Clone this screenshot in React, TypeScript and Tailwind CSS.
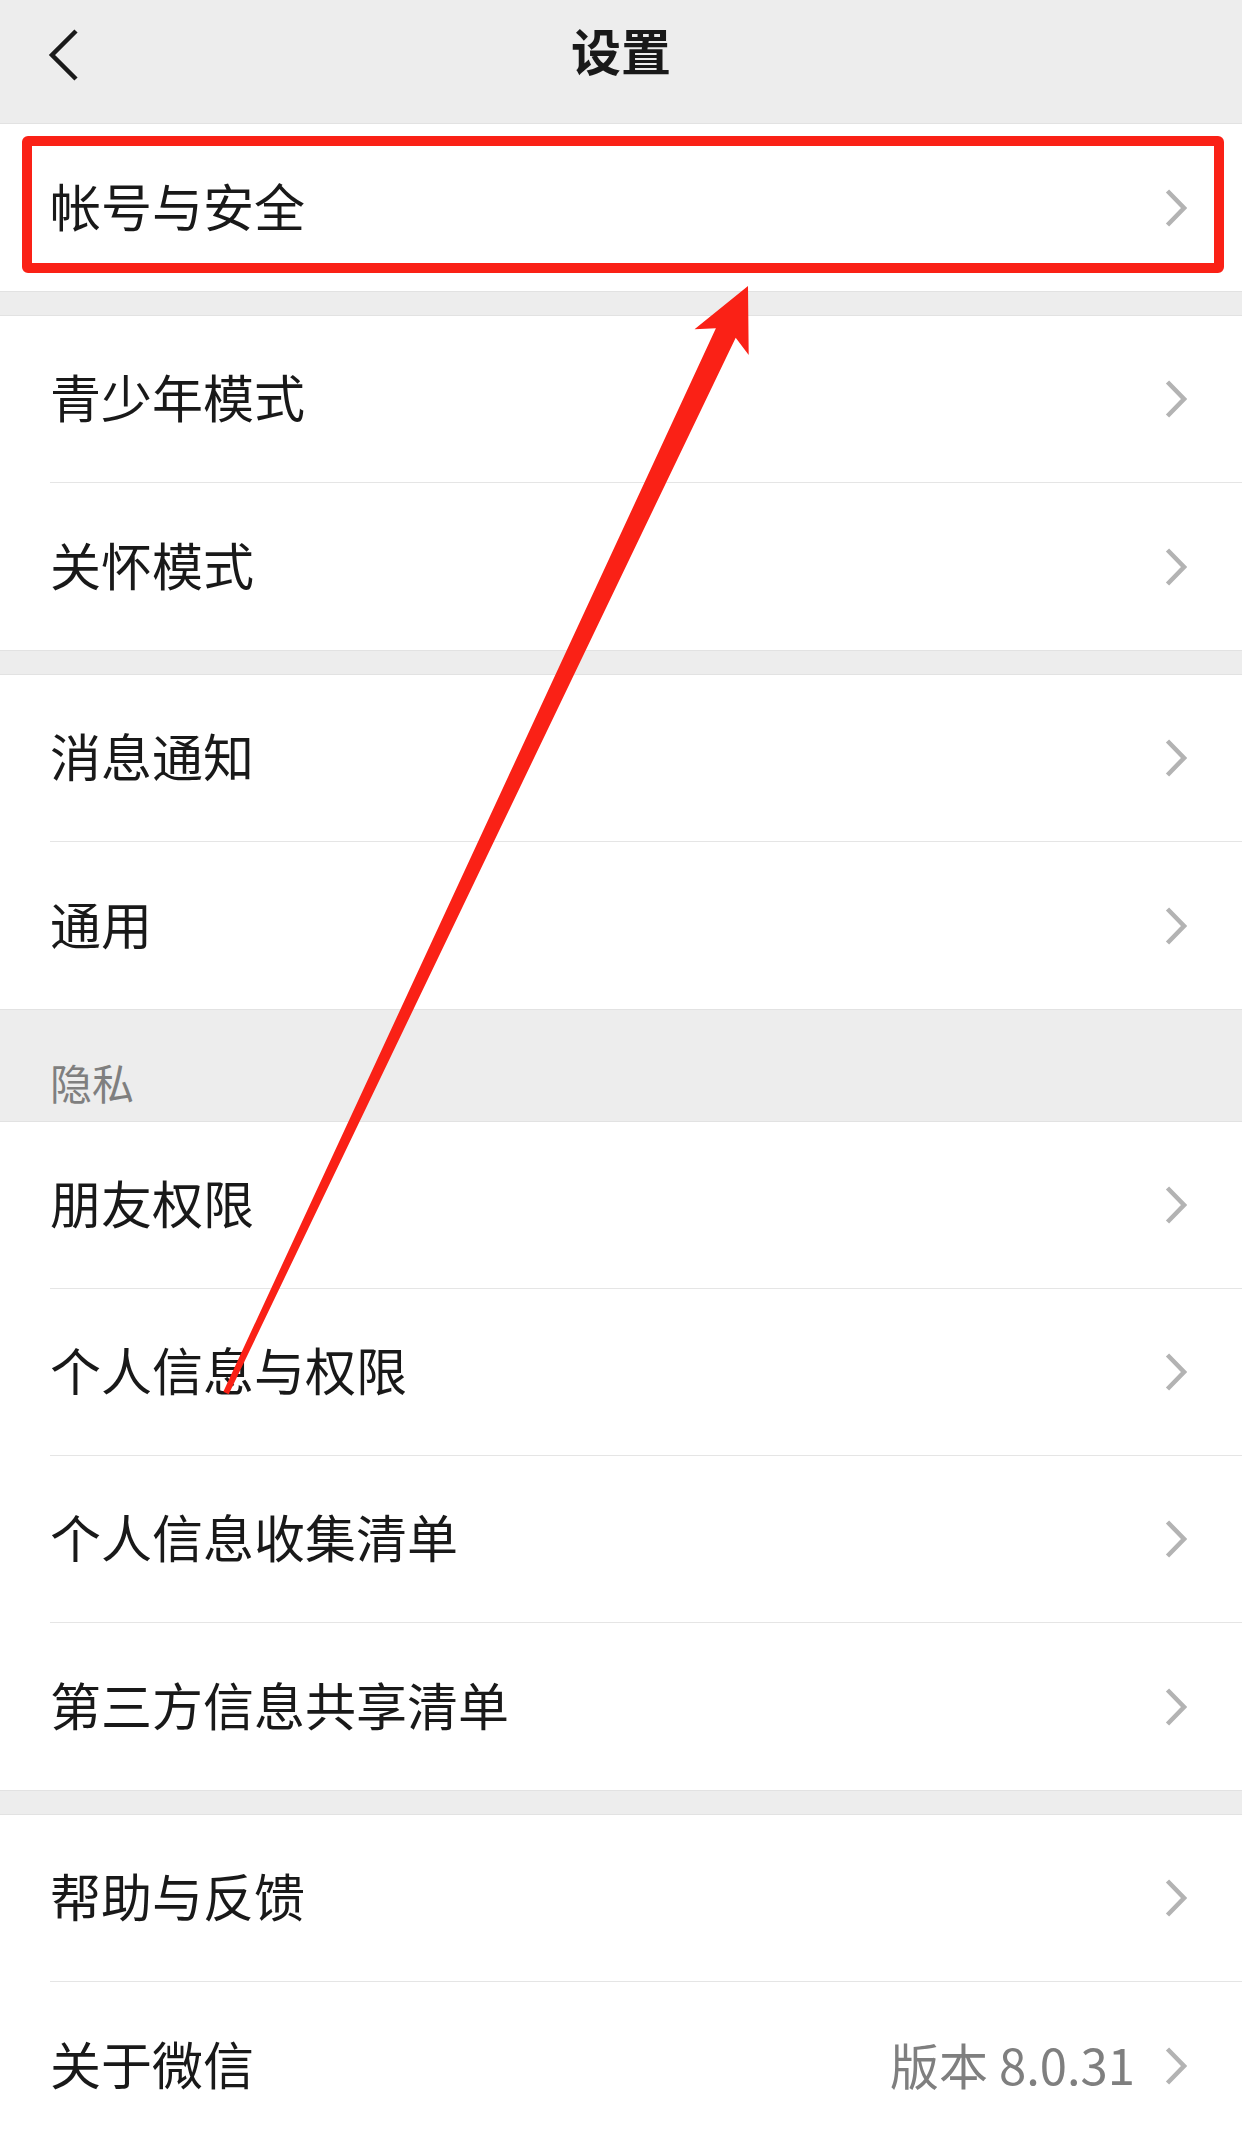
import React from "react";

const Chevron = () => (
  <svg width="22" height="38" viewBox="0 0 22 38" className="shrink-0">
    <polyline points="2.5,2 19,19 2.5,36" fill="none" stroke="#b3b3b3" strokeWidth="4.5" strokeLinejoin="miter" />
  </svg>
);

type Item = { label: string; value?: string };

const Row = ({ item, last }: { item: Item; last: boolean }) => (
  <div className="bg-white pl-[50px]">
    <div
      className={
        "flex h-[167px] items-center justify-between pr-[55px] " +
        (last ? "" : "border-b border-[#e5e5e5]")
      }
    >
      <span className="pb-[5px] text-[51px] leading-none text-[#191919]">{item.label}</span>
      <div className="flex items-center">
        {item.value && (
          <span className="mr-[30px] pb-[4px] text-[49px] leading-none text-[#7f7f7f]">{item.value}</span>
        )}
        <Chevron />
      </div>
    </div>
  </div>
);

const Section = ({ items }: { items: Item[] }) => (
  <div className="border-y border-[#e2e2e2] bg-white">
    {items.map((it, i) => (
      <Row key={it.label} item={it} last={i === items.length - 1} />
    ))}
  </div>
);

const Gap = () => <div className="h-[23px] bg-[#ededed]" />;

export default function App() {
  return (
    <div className="relative h-[2135px] w-full overflow-hidden bg-[#ededed] font-['Noto_Sans_CJK_SC',sans-serif]">
      <div className="grid h-[123px] grid-cols-[1fr_auto_1fr] items-center bg-[#ededed] pb-[14px]">
        <div className="pl-[48px]">
          <svg width="32" height="52" viewBox="0 0 32 52">
            <polyline points="28,2 4,26 28,50" fill="none" stroke="#1a1a1a" strokeWidth="4.5" strokeLinejoin="miter" />
          </svg>
        </div>
        <div className="pb-[12px] text-[50px] font-semibold leading-none text-[#191919]">设置</div>
        <div />
      </div>

      <Section items={[{ label: "帐号与安全" }]} />
      <Gap />
      <Section items={[{ label: "青少年模式" }, { label: "关怀模式" }]} />
      <Gap />
      <Section items={[{ label: "消息通知" }, { label: "通用" }]} />
      <div className="flex h-[111px] items-end bg-[#ededed] pb-[18px] pl-[50px]">
        <span className="text-[42px] leading-none text-[#7f7f7f]">隐私</span>
      </div>
      <Section
        items={[
          { label: "朋友权限" },
          { label: "个人信息与权限" },
          { label: "个人信息收集清单" },
          { label: "第三方信息共享清单" },
        ]}
      />
      <Gap />
      <Section items={[{ label: "帮助与反馈" }, { label: "关于微信", value: "版本 8.0.31" }]} />

      {/* annotation overlays */}
      <div className="pointer-events-none absolute left-[22px] top-[136px] h-[137px] w-[1202px] rounded-[6px] border-[10px] border-[#fa2116]" />
      <svg
        className="pointer-events-none absolute left-0 top-0"
        width="1242"
        height="2135"
        viewBox="0 0 1242 2135"
      >
        <polygon
          points="748,286 748.7,354.9 735.7,337.7 228.7,1394.3 223.3,1391.7 715.9,328.3 694.5,329.3"
          fill="#fa2116"
        />
      </svg>
    </div>
  );
}
